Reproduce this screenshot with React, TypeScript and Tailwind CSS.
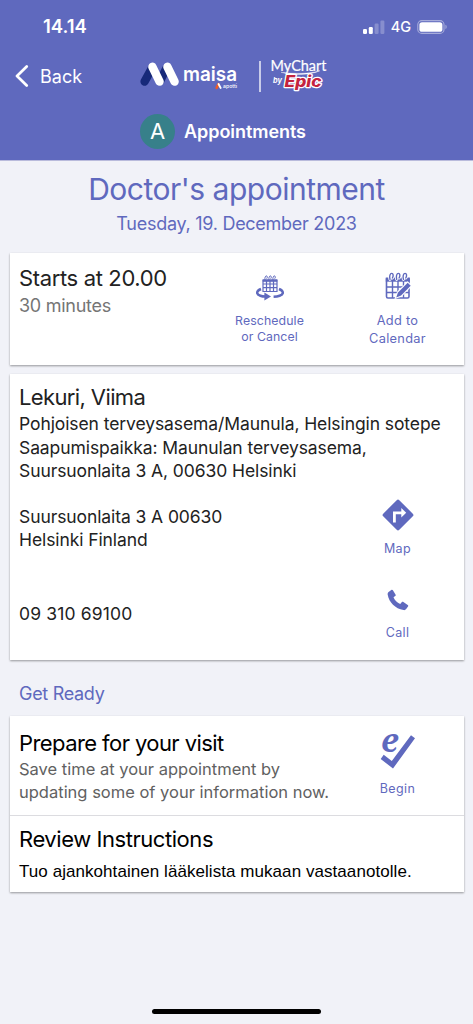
import type { ReactNode } from "react";
import clsx from "clsx";

function StatusBar() {
  return (
    <div className="flex h-[52px] items-center justify-between pl-[43px] pr-[25px] pt-[1px]">
      <span className="text-[18.5px] font-semibold">14.14</span>
      <div className="flex items-center">
        <svg width="22" height="14" viewBox="0 0 22 14" fill="#fff">
          <rect x="0" y="9" width="4" height="5" rx="1.2" />
          <rect x="5.8" y="7" width="4" height="7" rx="1.2" />
          <rect x="11.6" y="3.6" width="4" height="10.4" rx="1.2" opacity="0.25" />
          <rect x="17.4" y="0.5" width="4" height="13.5" rx="1.2" opacity="0.25" />
        </svg>
        <span className="ml-[6px] text-[14.5px] font-medium leading-[20px]">4G</span>
        <svg className="ml-[6px]" width="31" height="14" viewBox="0 0 31 14">
          <rect x="0.8" y="0.6" width="26.2" height="12.8" rx="4" fill="none" stroke="#fff" strokeOpacity="0.45" strokeWidth="1.1" />
          <rect x="2.4" y="2.2" width="23" height="9.6" rx="2.6" fill="#fff" />
          <path d="M28.5 4.8c1.5.6 1.5 3.8 0 4.4z" fill="#fff" fillOpacity="0.5" />
        </svg>
      </div>
    </div>
  );
}

function MaisaLogo() {
  return (
    <svg className="overflow-visible" width="99" height="36" viewBox="0 0 99 36">
      <g strokeWidth="8.4" strokeLinecap="round">
        <path d="M4.6 23.6L12 10M20 23.2L26 11" stroke="#17297a" />
        <path d="M12.4 8.8l7.2 14.8M27.4 8.8l7.2 14.8" stroke="#fff" />
      </g>
      <text x="43" y="22.8" fill="#fff" fontSize="19.5" fontWeight="600" textLength="54" lengthAdjust="spacingAndGlyphs">
        maisa
      </text>
      <path d="M76.6 29.8l1.9-3.6" stroke="#ee5a24" strokeWidth="2.6" strokeLinecap="round" />
      <path d="M78.6 26.100l2 3.800" stroke="#fff" strokeWidth="2" strokeLinecap="round" />
      <text x="83" y="30" fill="#fff" fontSize="5" fontWeight="500" textLength="14" lengthAdjust="spacingAndGlyphs">
        apotti
      </text>
    </svg>
  );
}

function MyChartLogo() {
  return (
    <svg className="overflow-visible" width="59" height="36" viewBox="0 0 59 36">
      <text x="0.5" y="13" fill="#fff" stroke="#fff" strokeWidth="0.2" fontSize="15.500" textLength="56" lengthAdjust="spacingAndGlyphs" className="font-[Lato,sans-serif]">
        MyChart
      </text>
      <path d="M11 14.300c13 1.800 28 1.600 39-1.600-9 4.400-27 5.200-39 1.600z" fill="#fff" stroke="#fff" strokeWidth="0.3" />
      <text x="3" y="25.3" fill="#fff" fontSize="7.5" fontWeight="700" fontStyle="italic" textLength="9" lengthAdjust="spacingAndGlyphs">
        by
      </text>
      <text
        x="14.500"
        y="29.4"
        fill="#c4233f"
        stroke="#fff"
        strokeWidth="2.4"
        paintOrder="stroke"
        strokeLinejoin="round"
        fontSize="15.5"
        fontWeight="800"
        fontStyle="italic"
        textLength="37"
        lengthAdjust="spacingAndGlyphs"
      >
        Epic
      </text>
    </svg>
  );
}

function RescheduleIcon() {
  return (
    <svg width="28" height="26" viewBox="0 0 28 26" fill="none" stroke="currentColor">
      <path d="M7 5h14v11.500H7zM7 9h14M7 12.700h14M10.500 6v10.500M14 6v10.500M17.500 6v10.500" strokeWidth="1.2" />
      <path d="M7 4.800h14v1.800H7z" fill="currentColor" strokeWidth="0.6" />
      <path d="M9 5.2c-.4-2.400.3-4.300 1.400-4.300s1.200 1.800.3 2.800M13 5.2c-.4-2.400.3-4.300 1.400-4.300s1.200 1.800.3 2.800M17 5.2c-.4-2.400.3-4.300 1.400-4.300s1.200 1.800.3 2.800" strokeWidth="1" />
      <path d="M5 14c-5 2-5 5.200-.6 6.700 1.400.5 3 .8 4.800.9M23 14c5 2 5 5.200.6 6.700-1.700.6-3.700.9-6 1" strokeWidth="2.500" />
      <path d="M8.4 17.600l6.600 3.900-6.600 3.900z" fill="currentColor" stroke="none" />
    </svg>
  );
}

function AddToCalendarIcon() {
  return (
    <svg width="26" height="28" viewBox="0 0 26 28" fill="none" stroke="currentColor">
      <path d="M1.500 7h22.500v17.500c0 1-.6 1.500-1.500 1.500H3c-1 0-1.500-.6-1.500-1.500z" strokeWidth="1.600" />
      <path d="M.8 5.500h24v4.200h-24z" fill="currentColor" stroke="none" />
      <path d="M2 15h22M2 20.500h22M7.500 9v17M13 9v17M18.500 9v17" strokeWidth="1.400" />
      <g strokeLinecap="round">
        <path d="M5 7.4C4.100 4 5.100 1.400 6.700 1.400s2 2.400.7 4.6M11.700 7.400c-.9-3.400.1-6 1.700-6s2 2.400.7 4.6M18.400 7.400c-.9-3.400.1-6 1.700-6s2 2.400.7 4.6" stroke="#fff" strokeWidth="3" />
        <path d="M5 7.4C4.100 4 5.100 1.400 6.700 1.400s2 2.400.7 4.6M11.700 7.400c-.9-3.400.1-6 1.700-6s2 2.400.7 4.6M18.400 7.400c-.9-3.400.1-6 1.700-6s2 2.400.7 4.6" strokeWidth="1.400" />
      </g>
      <path d="M11.2 25.4l1.800-5L22.700 10.800l3 2.900-9.600 9.900z" fill="currentColor" stroke="#fff" strokeWidth="2.200" paintOrder="stroke" />
    </svg>
  );
}

function MapIcon() {
  return (
    <svg width="32" height="32" viewBox="0 0 32 32">
      <path d="M14.7 1.2a1.8 1.8 0 0 1 2.6 0l13.5 13.5a1.8 1.8 0 0 1 0 2.6L17.3 30.8a1.8 1.8 0 0 1-2.6 0L1.2 17.3a1.8 1.8 0 0 1 0-2.6z" fill="currentColor" />
      <path d="M11 23.4V12.6h8.300V9l4.900 4.800-4.900 4.800v-3.400h-5.500v8.200z" fill="#fff" />
    </svg>
  );
}

function PhoneIcon() {
  return (
    <svg width="22" height="22" viewBox="0 0 22 22" fill="currentColor">
      <path d="M5.900 1.300L8.500 5.400c.4.700.3 1.300-.3 1.700L6.500 8.300c1.300 3.100 3.500 5.300 6.700 6.800l1.500-1.800c.5-.5 1.100-.6 1.700-.2l4.300 2.800c.6.4.7 1 .3 1.600l-1.800 2.600c-.7.900-1.600 1.200-2.700 1C8.300 19.700 2 13.400.700 5.800c-.2-1.100.1-2 .9-2.700L4.300 1c.6-.5 1.200-.4 1.600.3z" />
    </svg>
  );
}

function CheckInIcon() {
  return (
    <svg className="overflow-visible" width="34" height="36" viewBox="0 0 34 36" fill="currentColor">
      <text x="0" y="18.4" fontSize="32" fontWeight="700" fontStyle="italic" textLength="17.500" lengthAdjust="spacingAndGlyphs" className="font-['Noto_Serif','DejaVu_Serif','Liberation_Serif',serif]">
        e
      </text>
      <path d="M-.3 25L2.700 20.800l8.100 6.200L30 1.300l4 3L12 34.500z" />
    </svg>
  );
}

interface ActionProps {
  icon: ReactNode;
  lines: string[];
  className?: string;
  labelClassName?: string;
}

function Action({ icon, lines, className, labelClassName = "text-[12.5px] leading-[16px] tracking-[0.38px]" }: ActionProps) {
  return (
    <button className={clsx("flex w-[92px] shrink-0 flex-col items-center text-[#5f69be]", className)}>
      {icon}
      <span className={clsx("text-center", labelClassName)}>
        {lines.map((line) => (
          <span key={line} className="block">
            {line}
          </span>
        ))}
      </span>
    </button>
  );
}

function Card({ className, children }: { className?: string; children: ReactNode }) {
  return (
    <section className={clsx("mx-[9.5px] bg-white shadow-[0_1px_2px_rgba(0,0,0,0.38)]", className)}>
      {children}
    </section>
  );
}

export default function App() {
  return (
    <div className="flex h-[1024px] w-full flex-col bg-[#f1f2f8] font-[Inter,sans-serif] text-[#222]">
      <header className="h-[160px] shrink-0 bg-[#5f69be] text-white shadow-[0_1px_0_#b9bbdc]">
        <StatusBar />
        <div className="flex h-[48px] items-center">
          <button className="flex w-[140px] items-center pl-[15px]">
            <svg width="14" height="22" viewBox="0 0 14 22" fill="none" stroke="#fff" strokeWidth="2.7" strokeLinecap="round" strokeLinejoin="round">
              <path d="M11.7 1.5L2 11l9.7 9.5" />
            </svg>
            <span className="ml-[11px] text-[18px]">Back</span>
          </button>
          <MaisaLogo />
          <span className="ml-[20px] h-[31px] w-[1.5px] bg-[#c9cce9]" />
          <span className="ml-[9px]">
            <MyChartLogo />
          </span>
        </div>
        <div className="flex h-[63px] items-center pl-[140px]">
          <span className="flex size-[35px] items-center justify-center rounded-full bg-[#37808a] text-[22px]">A</span>
          <h1 className="ml-[9px] text-[18px] font-semibold tracking-[-0.05px]">Appointments</h1>
        </div>
      </header>

      <div className="h-[93px] shrink-0 pt-[9px] text-center text-[#5f69be]">
        <h2 className="text-[30px] leading-[40px] tracking-[-0.5px]">Doctor's appointment</h2>
        <p className="text-[18px] leading-[29px] tracking-[-0.27px]">Tuesday, 19. December 2023</p>
      </div>

      <Card className="flex h-[111.5px] shrink-0 pl-[9.5px] pr-[20px]">
        <div className="flex-1 pt-[12px]">
          <h3 className="text-[22px] leading-[27px] tracking-[-0.36px]">Starts at 20.00</h3>
          <p className="text-[18px] leading-[27px] tracking-[-0.27px] text-[#757575]">30 minutes</p>
        </div>
        <Action
          className="mr-[36px] pt-[22px]"
          icon={<span className="mb-[12px]"><RescheduleIcon /></span>}
          lines={["Reschedule", "or Cancel"]}
          labelClassName="text-[12.300px] leading-[16px] tracking-[0.1px]"
        />
        <Action
          className="pt-[19px]"
          icon={<span className="mb-[12px]"><AddToCalendarIcon /></span>}
          lines={["Add to", "Calendar"]}
          labelClassName="text-[12.800px] leading-[17.5px] tracking-[0.3px]"
        />
      </Card>

      <Card className="mt-[9.5px] h-[285.5px] shrink-0 pl-[9.5px] pr-[20px] text-[17.5px] leading-[23.500px] tracking-[-0.09px]">
        <div className="pt-[10px]">
          <h3 className="mb-[2px] text-[22px] leading-[26px] tracking-[-0.62px]">Lekuri, Viima</h3>
          <p className="whitespace-nowrap">
            Pohjoisen terveysasema/Maunula, Helsingin sotepe
            <br />
            Saapumispaikka: Maunulan terveysasema,
            <br />
            Suursuonlaita 3 A, 00630 Helsinki
          </p>
        </div>
        <div className="flex h-[87px] justify-between">
          <p className="pt-[22px]">
            Suursuonlaita 3 A 00630
            <br />
            Helsinki Finland
          </p>
          <Action className="pt-[16px]" icon={<span className="mb-[10px]"><MapIcon /></span>} lines={["Map"]} />
        </div>
        <div className="flex justify-between">
          <p className="pt-[32px] tracking-[0.15px]">09 310 69100</p>
          <Action className="pt-[19px]" icon={<span className="mb-[14px]"><PhoneIcon /></span>} lines={["Call"]} />
        </div>
      </Card>

      <h2 className="mt-[23px] pl-[19px] text-[18px] leading-[22px] tracking-[-0.3px] text-[#5f69be]">Get Ready</h2>

      <Card className="mt-[11.5px] h-[176px] shrink-0 text-black">
        <div className="flex h-[99.5px] justify-between border-b border-[#dcdce0] pl-[9.5px] pr-[20px]">
          <div className="pt-[14px]">
            <h3 className="mb-px text-[22px] leading-[27px] tracking-[-0.58px]">Prepare for your visit</h3>
            <p className="whitespace-nowrap text-[16.5px] leading-[23px] text-[#616161]">
              Save time at your appointment by
              <br />
              updating some of your information now.
            </p>
          </div>
          <Action className="pt-[18px]" icon={<span className="mb-[11px]"><CheckInIcon /></span>} lines={["Begin"]} />
        </div>
        <div className="pl-[9.5px] pt-[9px]">
          <h3 className="text-[22px] leading-[28px] tracking-[-0.44px]">Review Instructions</h3>
          <p className="mt-[7px] font-['Liberation_Sans',sans-serif] text-[17px] leading-[24px] tracking-[0.06px]">
            Tuo ajankohtainen lääkelista mukaan vastaanotolle.
          </p>
        </div>
      </Card>

      <div className="mx-auto mb-[10px] mt-auto h-[5px] w-[169px] rounded-full bg-black" />
    </div>
  );
}
